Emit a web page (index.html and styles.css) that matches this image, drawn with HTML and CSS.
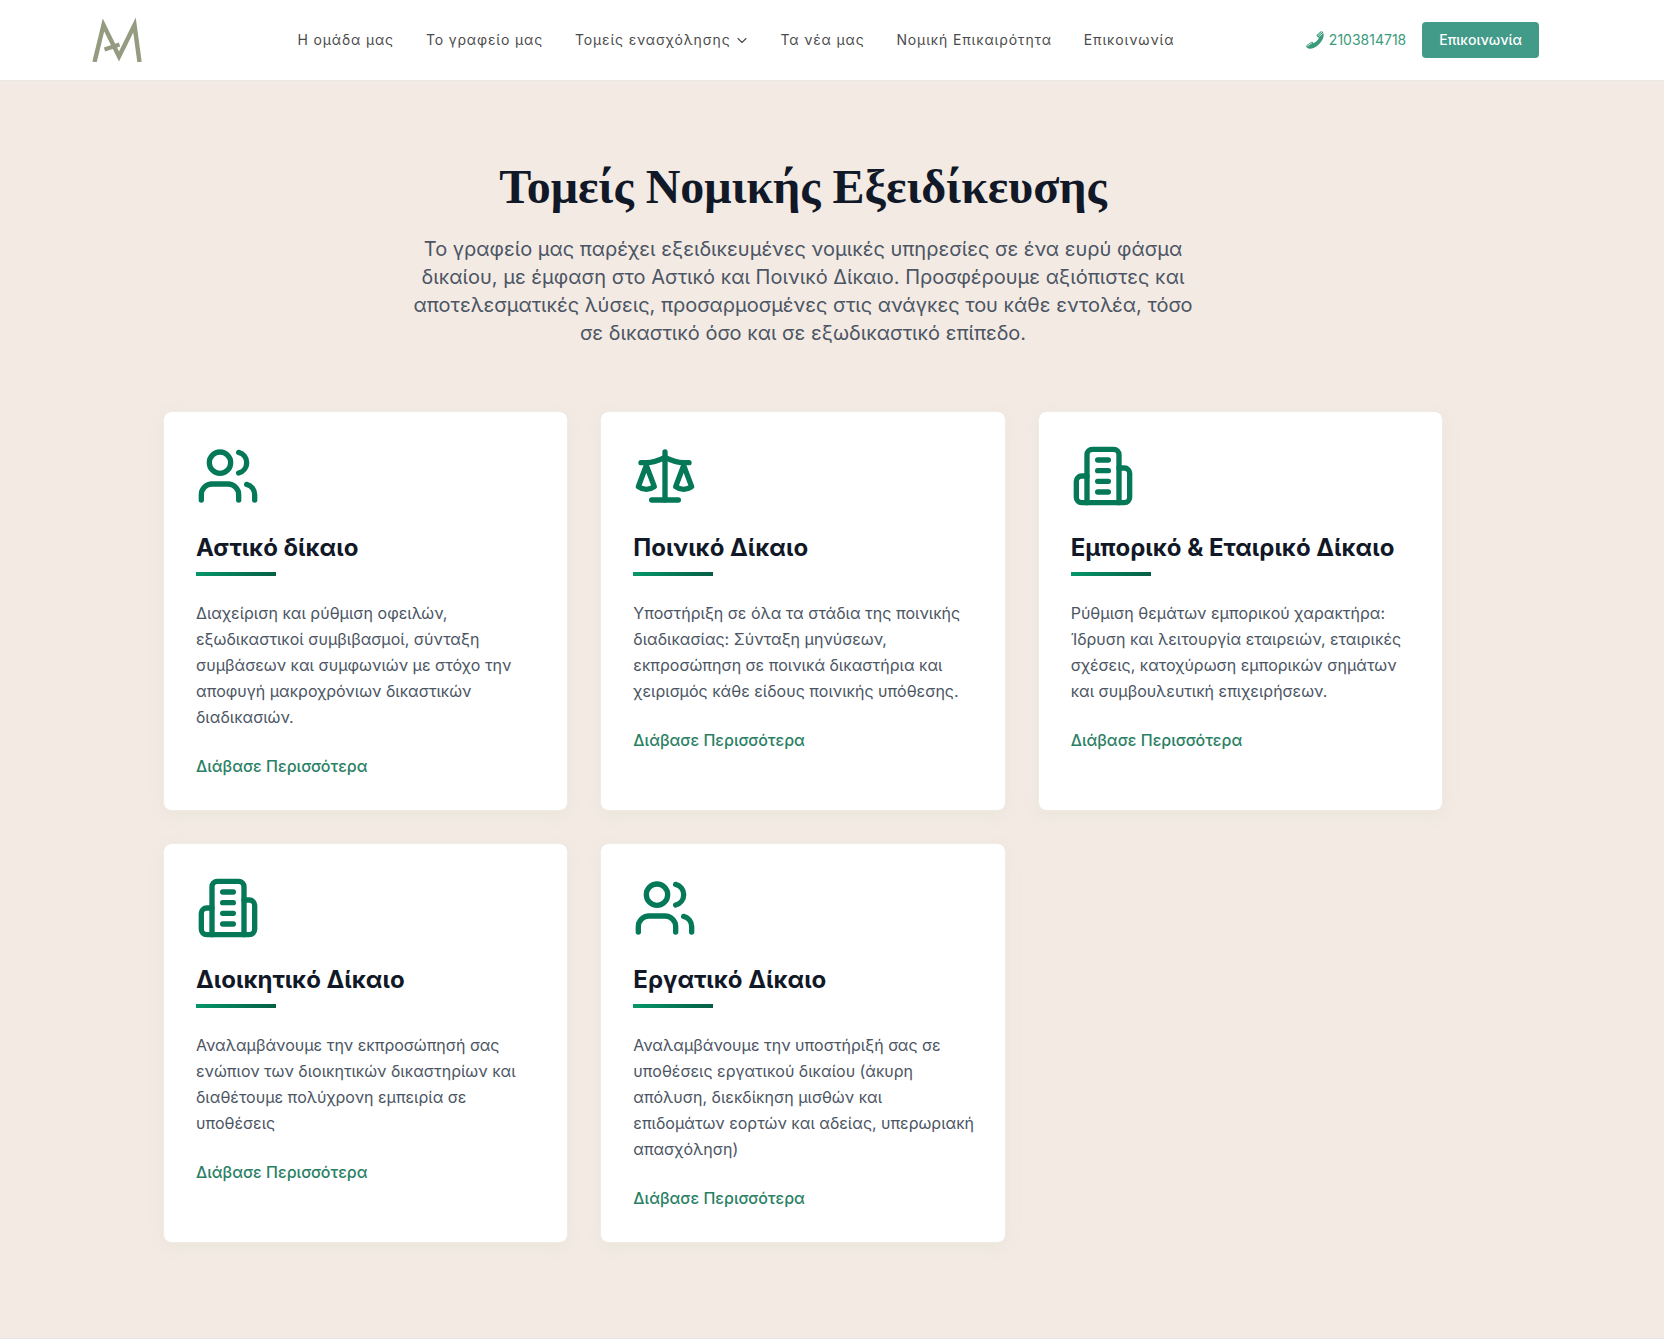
FILE: index.html
```html
<!DOCTYPE html>
<html lang="el">
<head>
<meta charset="utf-8">
<meta name="viewport" content="width=device-width, initial-scale=1">
<title>Τομείς Νομικής Εξειδίκευσης</title>
<link rel="stylesheet" href="styles.css">
</head>
<body>
<svg class="sprite" aria-hidden="true">
  <symbol id="users" viewBox="0 0 24 24"><path d="M16 21v-2a4 4 0 0 0-4-4H6a4 4 0 0 0-4 4v2"/><circle cx="9" cy="7" r="4"/><path d="M22 21v-2a4 4 0 0 0-3-3.87"/><path d="M16 3.13a4 4 0 0 1 0 7.75"/></symbol>
  <symbol id="scale" viewBox="0 0 24 24"><path d="m16 16 3-8 3 8c-.87.65-1.92 1-3 1s-2.13-.35-3-1Z"/><path d="m2 16 3-8 3 8c-.87.65-1.92 1-3 1s-2.13-.35-3-1Z"/><path d="M7 21h10"/><path d="M12 3v18"/><path d="M3 7h2c2 0 5-1 7-2 2 1 5 2 7 2h2"/></symbol>
  <symbol id="building" viewBox="0 0 24 24"><path d="M6 22V4a2 2 0 0 1 2-2h8a2 2 0 0 1 2 2v18Z"/><path d="M6 12H4a2 2 0 0 0-2 2v6a2 2 0 0 0 2 2h2"/><path d="M18 9h2a2 2 0 0 1 2 2v9a2 2 0 0 1-2 2h-2"/><path d="M10 6h4"/><path d="M10 10h4"/><path d="M10 14h4"/><path d="M10 18h4"/></symbol>
</svg>

<header class="header">
  <a class="logo" href="#" aria-label="Αρχική">
    <svg width="50" height="44" viewBox="0 0 50 44" fill="none" stroke="#949b80" stroke-width="4.4" stroke-miterlimit="10"><path d="M2.500 44 11.500 7 27 38.500 42.500 7 47.500 44"/><path d="M12.500 31.500 27.500 26.500"/></svg>
  </a>
  <nav class="nav" aria-label="Κύριο μενού">
    <a href="#">Η ομάδα μας</a>
    <a href="#">Το γραφείο μας</a>
    <a class="nav-parent" href="#">Τομείς ενασχόλησης
      <svg width="12" height="12" viewBox="0 0 12 12" fill="none" stroke="currentColor" stroke-width="1.1" stroke-linecap="round" stroke-linejoin="round"><path d="m2 4.500 4 4 4-4"/></svg>
    </a>
    <a href="#">Τα νέα μας</a>
    <a href="#">Νομική Επικαιρότητα</a>
    <a href="#">Επικοινωνία</a>
  </nav>
  <div class="contact">
    <a class="phone" href="tel:2103814718">
      <svg width="18" height="18" viewBox="0 0 18 18" fill="#3a9b7c"><path d="M10.600 4 14.600.4c.8-.4 1.700-.2 2.300.6 1.200 2 1 4.600-.4 7.400-1.800 3.500-5 6.900-8.800 8.600-2.900 1.200-5.400 1-6.900-.6-.7-.8-.8-1.500-.2-2.200l4.600-3.200c.9-.4 1.700.1 2.200 1.200 2.500-1 4.600-3 5.600-5.400-1.500-.6-2.600-1.500-2.400-2.800Z"/><path d="m12 4.500 3.600-3.200M1.600 14.900l4-2.800M13.500 5.300l3-2.700" fill="none" stroke="#fff" stroke-width=".8" stroke-linecap="round"/></svg>
      2103814718
    </a>
    <button class="button" type="button">Επικοινωνία</button>
  </div>
</header>

<main class="areas">
  <div class="intro">
    <h1>Τομείς Νομικής Εξειδίκευσης</h1>
    <p>Το γραφείο μας παρέχει εξειδικευμένες νομικές υπηρεσίες σε ένα ευρύ φάσμα δικαίου, με έμφαση στο Αστικό και Ποινικό Δίκαιο. Προσφέρουμε αξιόπιστες και αποτελεσματικές λύσεις, προσαρμοσμένες στις ανάγκες του κάθε εντολέα, τόσο σε δικαστικό όσο και σε εξωδικαστικό επίπεδο.</p>
  </div>
  <div class="grid">
    <article class="card">
      <svg class="icon"><use href="#users"/></svg>
      <h2>Αστικό δίκαιο</h2>
      <p>Διαχείριση και ρύθμιση οφειλών, εξωδικαστικοί συμβιβασμοί, σύνταξη συμβάσεων και συμφωνιών με στόχο την αποφυγή μακροχρόνιων δικαστικών διαδικασιών.</p>
      <a href="#">Διάβασε Περισσότερα</a>
    </article>
    <article class="card">
      <svg class="icon"><use href="#scale"/></svg>
      <h2>Ποινικό Δίκαιο</h2>
      <p>Υποστήριξη σε όλα τα στάδια της ποινικής διαδικασίας: Σύνταξη μηνύσεων, εκπροσώπηση σε ποινικά δικαστήρια και χειρισμός κάθε είδους ποινικής υπόθεσης.</p>
      <a href="#">Διάβασε Περισσότερα</a>
    </article>
    <article class="card">
      <svg class="icon"><use href="#building"/></svg>
      <h2>Εμπορικό &amp; Εταιρικό Δίκαιο</h2>
      <p>Ρύθμιση θεμάτων εμπορικού χαρακτήρα: Ίδρυση και λειτουργία εταιρειών, εταιρικές σχέσεις, κατοχύρωση εμπορικών σημάτων και συμβουλευτική επιχειρήσεων.</p>
      <a href="#">Διάβασε Περισσότερα</a>
    </article>
    <article class="card">
      <svg class="icon"><use href="#building"/></svg>
      <h2>Διοικητικό Δίκαιο</h2>
      <p>Αναλαμβάνουμε την εκπροσώπησή σας ενώπιον των διοικητικών δικαστηρίων και διαθέτουμε πολύχρονη εμπειρία σε υποθέσεις</p>
      <a href="#">Διάβασε Περισσότερα</a>
    </article>
    <article class="card">
      <svg class="icon"><use href="#users"/></svg>
      <h2>Εργατικό Δίκαιο</h2>
      <p>Αναλαμβάνουμε την υποστήριξή σας σε υποθέσεις εργατικού δικαίου (άκυρη απόλυση, διεκδίκηση μισθών και επιδομάτων εορτών και αδείας, υπερωριακή απασχόληση)</p>
      <a href="#">Διάβασε Περισσότερα</a>
    </article>
  </div>
</main>
<footer class="footer"></footer>
</body>
</html>
```
FILE: styles.css
```css
* { box-sizing: border-box; margin: 0; padding: 0; }

body {
  background: #fff;
  font-family: Inter, "Liberation Sans", sans-serif;
  font-size: 16px;
  line-height: 24px;
  color: #4b5563;
}

a { text-decoration: none; color: inherit; }

.sprite { display: none; }

.header {
  display: flex;
  align-items: center;
  justify-content: space-between;
  height: 81px;
  padding: 0 125px 0 92px;
  border-bottom: 1px solid #ece8e4;
}

.logo { display: flex; margin-right: 24px; }

.nav {
  display: flex;
  gap: 32px;
  font-size: 14px;
  line-height: 20px;
  letter-spacing: 0.06em;
  color: #4b4b4b;
  white-space: nowrap;
}

.nav-parent { display: flex; align-items: center; gap: 6px; }

.contact { display: flex; align-items: center; gap: 16px; font-size: 14px; line-height: 20px; }

.phone { display: flex; align-items: center; gap: 5px; color: #3a9b7c; }

.button {
  padding: 8px 17px;
  border: 0;
  border-radius: 4px;
  background: #429a88;
  color: #fff;
  font: 500 14px/20px Inter, "Liberation Sans", sans-serif;
}

.areas {
  padding: 80px 74px 95px 16px;
  background: #f3eae4;
}

.intro {
  max-width: 800px;
  margin: 0 auto 64px;
  text-align: center;
}

.intro h1 {
  margin-bottom: 22px;
  font: 700 48px/52px "Liberation Serif", serif;
  color: #111827;
}

.intro p {
  font-size: 20px;
  line-height: 28px;
  font-variation-settings: "opsz" 20;
}

.grid {
  display: grid;
  grid-template-columns: repeat(3, 1fr);
  gap: 32px;
  max-width: 1280px;
  margin: 0 auto;
}

.card {
  padding: 32px 28px 32px 32px;
  border: 1px solid #f0ebe5;
  border-radius: 8px;
  background: #fff;
  background-clip: padding-box;
  box-shadow: 0 4px 16px rgba(220, 222, 200, 0.3);
}

.icon {
  display: block;
  width: 64px;
  height: 64px;
  margin-bottom: 24px;
  fill: none;
  stroke: #047857;
  stroke-width: 2;
  stroke-linecap: round;
  stroke-linejoin: round;
}

.card h2 {
  font-size: 24px;
  line-height: 32px;
  font-weight: 700;
  font-variation-settings: "opsz" 24;
  color: #111827;
}

.card h2::after {
  content: "";
  display: block;
  width: 80px;
  height: 4px;
  margin: 8px 0 24px;
  background: linear-gradient(to right, #059669, #065f46);
}

.card p { margin-bottom: 24px; line-height: 26px; }

.card a { display: inline-block; font-weight: 500; color: #2a8064; }

.footer { border-top: 1px solid #e5e7eb; }
```
